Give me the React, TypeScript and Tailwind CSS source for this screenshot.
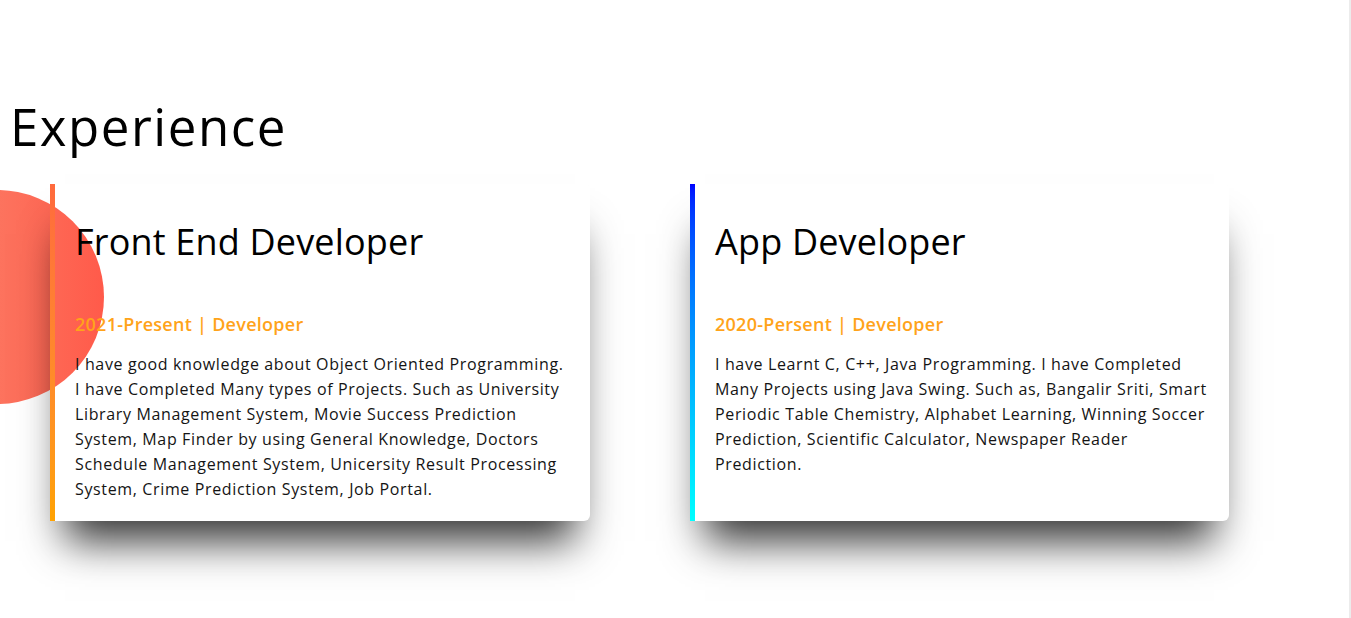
import React from 'react';

const frontEndLines = [
  'I have good knowledge about Object Oriented Programming.',
  'I have Completed Many types of Projects. Such as University',
  'Library Management System, Movie Success Prediction',
  'System, Map Finder by using General Knowledge, Doctors',
  'Schedule Management System, Unicersity Result Processing',
  'System, Crime Prediction System, Job Portal.',
];

const appLines = [
  'I have Learnt C, C++, Java Programming. I have Completed',
  'Many Projects using Java Swing. Such as, Bangalir Sriti, Smart',
  'Periodic Table Chemistry, Alphabet Learning, Winning Soccer',
  'Prediction, Scientific Calculator, Newspaper Reader',
  'Prediction.',
];

function Card({
  title,
  period,
  lines,
  bar,
}: {
  title: string;
  period: string;
  lines: string[];
  bar: string;
}) {
  return (
    <div className="relative flex">
      {/* white body sits under the decorative circle */}
      <div className="absolute inset-0 z-0 rounded-r-md bg-white" />
      {/* shadow layer paints over the circle */}
      <div className="pointer-events-none absolute inset-0 z-[2] rounded-r-md shadow-[0_35px_40px_-15px_rgba(0,0,0,0.8)]" />
      <div className={`relative z-[3] w-[5px] shrink-0 ${bar}`} />
      <div className="relative z-[3] flex-1 pl-5 pr-5 pt-[40px] pb-[19px]">
        <h3 className="text-[36px] leading-none font-normal tracking-[0.005em] text-black">{title}</h3>
        <p className="mt-[55px] text-[18px] leading-none font-semibold tracking-[0.015em] text-[#ffa31a]">{period}</p>
        <p className="mt-[19px] text-[16px] leading-[25px] tracking-[0.04em] text-[#141414] whitespace-nowrap">
          {lines.map((l, i) => (
            <span key={i} className="block">
              {l}
            </span>
          ))}
        </p>
      </div>
    </div>
  );
}

export default function App() {
  return (
    <div
      className="flex h-[618px] w-full overflow-hidden bg-white"
      style={{ fontFamily: '"Open Sans", "Liberation Sans", sans-serif' }}
    >
      <main className="relative isolate flex-1">
        {/* decorative circle */}
        <div className="absolute left-[-110px] top-[190px] z-[1] h-[214px] w-[214px] rounded-full bg-gradient-to-r from-[#f98a72] to-[#ff5a4a]" />

        <h2 className="pl-[10px] pt-[101px] text-[51px] leading-none font-normal tracking-[0.03em] text-black">
          Experience
        </h2>

        <div className="mt-[32px] grid grid-cols-[540px_539px] gap-[100px] pl-[50px]">
          <Card
            title="Front End Developer"
            period="2021-Present | Developer"
            lines={frontEndLines}
            bar="bg-gradient-to-b from-[#ff6a3d] to-[#ffa200]"
          />
          <Card
            title="App Developer"
            period="2020-Persent | Developer"
            lines={appLines}
            bar="bg-gradient-to-b from-[#0000ff] to-[#00ffff]"
          />
        </div>
      </main>
      <div className="w-[2px] shrink-0 bg-[#ececec]" />
    </div>
  );
}
